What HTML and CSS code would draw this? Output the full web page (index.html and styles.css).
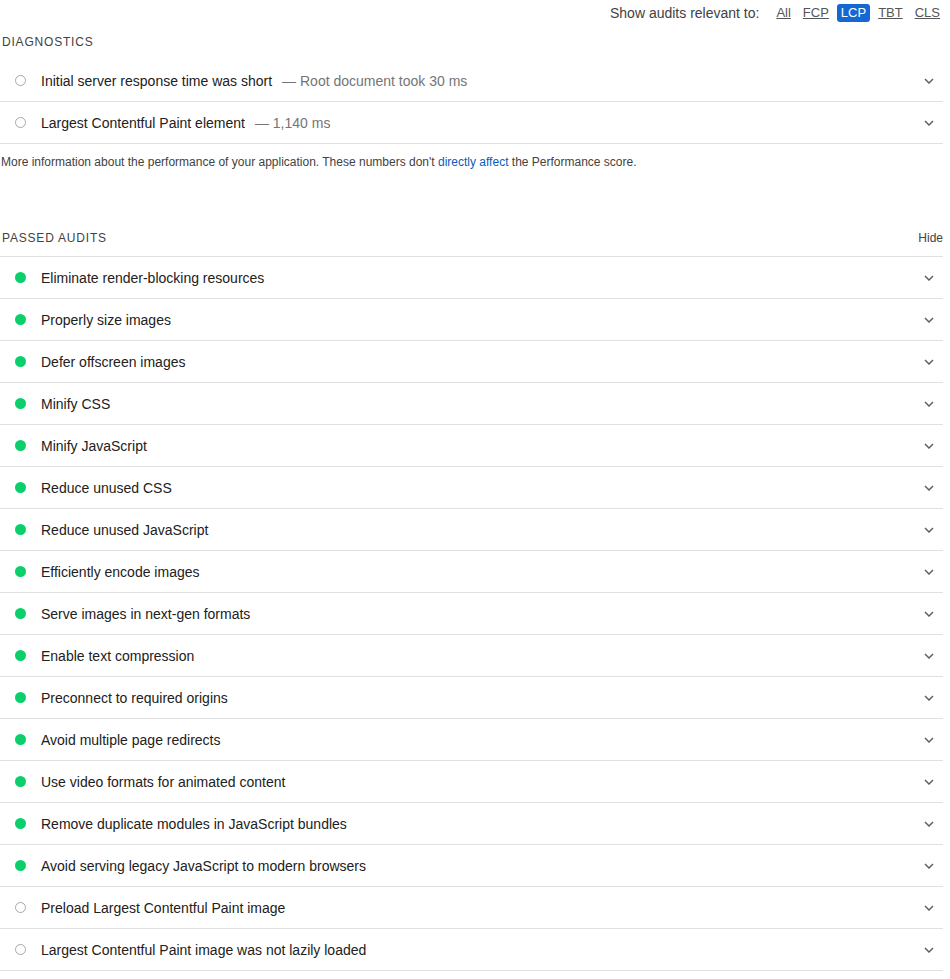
FILE: index.html
```html
<!DOCTYPE html>
<html>
<head>
<meta charset="utf-8">
<link rel="stylesheet" href="styles.css">
</head>
<body>
<div class="page">
  <div class="filter">
    <span class="filter-label">Show audits relevant to:</span>
    <span class="chip">All</span>
    <span class="chip">FCP</span>
    <span class="chip chip-active">LCP</span>
    <span class="chip">TBT</span>
    <span class="chip">CLS</span>
  </div>

  <div class="group-head">
    <span class="group-title">Diagnostics</span>
  </div>
  <div class="audit"><span class="icon icon-info"></span><span class="title">Initial server response time was short</span><span class="display">— Root document took 30 ms</span><svg class="chev" viewBox="0 0 10 6"><path d="M1 1 L5 5 L9 1"/></svg></div>
  <div class="audit"><span class="icon icon-info"></span><span class="title">Largest Contentful Paint element</span><span class="display">— 1,140 ms</span><svg class="chev" viewBox="0 0 10 6"><path d="M1 1 L5 5 L9 1"/></svg></div>
  <div class="desc">More information about the performance of your application. These numbers don't <a class="link">directly affect</a> the Performance score.</div>

  <div class="group-head group-passed">
    <span class="group-title">Passed audits</span>
    <span class="hide">Hide</span>
  </div>
  <div class="audit"><span class="icon icon-pass"></span><span class="title">Eliminate render-blocking resources</span><svg class="chev" viewBox="0 0 10 6"><path d="M1 1 L5 5 L9 1"/></svg></div>
  <div class="audit"><span class="icon icon-pass"></span><span class="title">Properly size images</span><svg class="chev" viewBox="0 0 10 6"><path d="M1 1 L5 5 L9 1"/></svg></div>
  <div class="audit"><span class="icon icon-pass"></span><span class="title">Defer offscreen images</span><svg class="chev" viewBox="0 0 10 6"><path d="M1 1 L5 5 L9 1"/></svg></div>
  <div class="audit"><span class="icon icon-pass"></span><span class="title">Minify CSS</span><svg class="chev" viewBox="0 0 10 6"><path d="M1 1 L5 5 L9 1"/></svg></div>
  <div class="audit"><span class="icon icon-pass"></span><span class="title">Minify JavaScript</span><svg class="chev" viewBox="0 0 10 6"><path d="M1 1 L5 5 L9 1"/></svg></div>
  <div class="audit"><span class="icon icon-pass"></span><span class="title">Reduce unused CSS</span><svg class="chev" viewBox="0 0 10 6"><path d="M1 1 L5 5 L9 1"/></svg></div>
  <div class="audit"><span class="icon icon-pass"></span><span class="title">Reduce unused JavaScript</span><svg class="chev" viewBox="0 0 10 6"><path d="M1 1 L5 5 L9 1"/></svg></div>
  <div class="audit"><span class="icon icon-pass"></span><span class="title">Efficiently encode images</span><svg class="chev" viewBox="0 0 10 6"><path d="M1 1 L5 5 L9 1"/></svg></div>
  <div class="audit"><span class="icon icon-pass"></span><span class="title">Serve images in next-gen formats</span><svg class="chev" viewBox="0 0 10 6"><path d="M1 1 L5 5 L9 1"/></svg></div>
  <div class="audit"><span class="icon icon-pass"></span><span class="title">Enable text compression</span><svg class="chev" viewBox="0 0 10 6"><path d="M1 1 L5 5 L9 1"/></svg></div>
  <div class="audit"><span class="icon icon-pass"></span><span class="title">Preconnect to required origins</span><svg class="chev" viewBox="0 0 10 6"><path d="M1 1 L5 5 L9 1"/></svg></div>
  <div class="audit"><span class="icon icon-pass"></span><span class="title">Avoid multiple page redirects</span><svg class="chev" viewBox="0 0 10 6"><path d="M1 1 L5 5 L9 1"/></svg></div>
  <div class="audit"><span class="icon icon-pass"></span><span class="title">Use video formats for animated content</span><svg class="chev" viewBox="0 0 10 6"><path d="M1 1 L5 5 L9 1"/></svg></div>
  <div class="audit"><span class="icon icon-pass"></span><span class="title">Remove duplicate modules in JavaScript bundles</span><svg class="chev" viewBox="0 0 10 6"><path d="M1 1 L5 5 L9 1"/></svg></div>
  <div class="audit"><span class="icon icon-pass"></span><span class="title">Avoid serving legacy JavaScript to modern browsers</span><svg class="chev" viewBox="0 0 10 6"><path d="M1 1 L5 5 L9 1"/></svg></div>
  <div class="audit"><span class="icon icon-info"></span><span class="title">Preload Largest Contentful Paint image</span><svg class="chev" viewBox="0 0 10 6"><path d="M1 1 L5 5 L9 1"/></svg></div>
  <div class="audit"><span class="icon icon-info"></span><span class="title">Largest Contentful Paint image was not lazily loaded</span><svg class="chev" viewBox="0 0 10 6"><path d="M1 1 L5 5 L9 1"/></svg></div>
</div>
</body>
</html>
```
FILE: styles.css
```css
html, body {
  margin: 0;
  padding: 0;
  background: #fff;
}
body {
  font-family: "Liberation Sans", Arial, sans-serif;
  color: #212121;
}
.page {
  width: 943px;
}
.filter {
  height: 25px;
  display: flex;
  align-items: center;
  justify-content: flex-end;
  margin-right: -1px;
  font-size: 14px;
  color: #424242;
}
.filter-label {
  margin-right: 9px;
}
.chip {
  font-size: 13px;
  color: #555;
  text-decoration: underline;
  padding: 1px 4px;
  margin-left: 4px;
  border-radius: 3px;
  line-height: 16px;
}
.chip-active {
  background: #1567d3;
  color: #fff;
  text-decoration: none;
}
.group-head {
  display: flex;
  justify-content: space-between;
  align-items: center;
  padding: 9px 0 10px 2px;
  line-height: 16px;
}
.group-title {
  font-size: 12px;
  text-transform: uppercase;
  letter-spacing: 0.8px;
  color: #424242;
}
.group-passed {
  margin-top: 51px;
  border-bottom: 1px solid #e0e0e0;
}
.hide {
  font-size: 12px;
  color: #424242;
}
.audit {
  box-sizing: border-box;
  height: 42px;
  display: flex;
  align-items: center;
  border-bottom: 1px solid #e0e0e0;
  font-size: 14px;
}
.icon {
  box-sizing: border-box;
  width: 11px;
  height: 11px;
  border-radius: 50%;
  margin-left: 15px;
  margin-right: 15px;
  flex: none;
}
.icon-info {
  border: 1.5px solid #a8a8a8;
}
.icon-pass {
  background: #0cce6b;
}
.title {
  color: #212121;
}
.display {
  color: #757575;
  margin-left: 10px;
}
.chev {
  width: 10px;
  height: 6px;
  margin-left: auto;
  margin-right: 9px;
  fill: none;
  stroke: #616161;
  stroke-width: 1.5;
}
.desc {
  font-size: 12px;
  line-height: 16px;
  color: #424242;
  margin-top: 10px;
  padding-left: 1px;
}
.link {
  color: #0b5cbc;
}
```
